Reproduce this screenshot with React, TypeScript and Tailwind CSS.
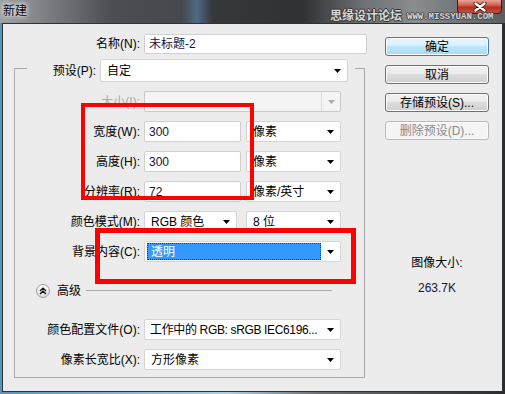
import React from "react"

const font = "font-['Liberation_Sans','Noto_Sans_CJK_SC',sans-serif]"

const Arrow = ({ color = "#000" }: { color?: string }) => (
  <svg width="7" height="4" viewBox="0 0 7 4">
    <path d="M0 0H7L3.5 4Z" fill={color} />
  </svg>
)

const Select = ({
  value,
  className,
  disabled,
  selected,
  tight,
}: {
  value?: string
  className: string
  disabled?: boolean
  selected?: boolean
  tight?: boolean
}) => (
  <div
    className={`flex items-center rounded-[2px] border ${
      disabled ? "border-[#c9c9c9] bg-[#f4f4f4]" : "border-[#d4d4d4] bg-white"
    } ${className}`}
  >
    {selected ? (
      <div className="ml-[2px] flex h-[17px] flex-1 items-center border border-dotted border-[#333] bg-[#3399ff] pl-[3px] text-white">
        {value}
      </div>
    ) : (
      <div
        className={`flex-1 overflow-hidden whitespace-nowrap ${tight ? "pl-[5px] tracking-[-0.35px]" : "pl-[6px]"}`}
      >
        {value}
      </div>
    )}
    <div
      className={`flex h-full w-[19px] shrink-0 items-center justify-center ${
        disabled ? "border-l border-[#dcdcdc]" : ""
      }`}
    >
      <Arrow color={disabled ? "#a8a8a8" : "#000"} />
    </div>
  </div>
)

const Input = ({ value, className }: { value: string; className: string }) => (
  <div
    className={`flex items-center rounded-[2px] border border-[#cfcfcf] bg-white pl-[4px] text-[#141440] ${className}`}
  >
    {value}
  </div>
)

const Label = ({ text, className, gray }: { text: string; className: string; gray?: boolean }) => (
  <div className={`shrink-0 text-right ${gray ? "text-[#a9a9a9]" : "text-black"} ${className}`}>
    {text}
  </div>
)

const Button = ({ text, kind }: { text: string; kind?: "default" | "disabled" }) => {
  const style =
    kind === "default"
      ? "border-[#3c7fb1] bg-[linear-gradient(#eaf6fd,#d9f0fc_45%,#bee6fd_50%,#a7d9f5)] text-black"
      : kind === "disabled"
        ? "border-[#b5b9bc] bg-[#f4f4f4] text-[#8a8a8a]"
        : "border-[#707070] bg-[linear-gradient(#f2f2f2,#ebebeb_45%,#dddddd_50%,#cfcfcf)] text-black"
  return (
    <div
      className={`flex h-[19px] w-[104px] items-center justify-center rounded-[3px] border shadow-[inset_0_0_0_1px_#fbfbfb] ${style}`}
    >
      {text}
    </div>
  )
}

export default function App() {
  return (
    <div
      className={`relative h-[394px] w-[505px] overflow-hidden bg-[linear-gradient(90deg,#5c93b6,#a9d0e6_45%,#6e7378_62%,#2a2c2e)] text-[12px] leading-[16px] ${font}`}
    >
      {/* title bar */}
      <div className="relative h-[23px] bg-[linear-gradient(90deg,#9da1a4_0%,#7c8084_9%,#4b4f53_22%,#45484c_36%,#4f6a85_39%,#36393c_42%,#2f3235_60%,#6d7074_72%,#8a8d90_82%,#5b5e61_100%)]">
        <div className="pl-[3px] pt-[3px] text-black [text-shadow:0_0_4px_#fff,0_0_6px_#fff]">新建</div>
        <div className="absolute left-[457px] top-[-1px] flex h-[15px] w-[45px] items-center justify-center rounded-b-[4px] border border-[#4a1510] bg-[linear-gradient(#e9a598,#d0604f_40%,#b8301f_55%,#c8503c)]">
          <svg width="14" height="10" viewBox="0 0 14 10">
            <path d="M2.5 1.5L11.5 8.5M11.5 1.5L2.5 8.5" stroke="#3a0d08" strokeWidth="4" strokeLinecap="round" />
            <path d="M2.5 1.5L11.5 8.5M11.5 1.5L2.5 8.5" stroke="#fff" strokeWidth="2.4" strokeLinecap="round" />
          </svg>
        </div>
        {/* watermark sits on top of the window chrome */}
        <div className="absolute left-[330px] top-[9px] flex items-end gap-[5px]">
          <span className="text-[12px] font-bold leading-[14px] text-[#d8d8d8] [text-shadow:-1px_0_#333,1px_0_#333,0_-1px_#333,0_1px_#333]">
            思缘设计论坛
          </span>
          <span className="font-['Liberation_Mono',monospace] text-[9px] font-bold leading-[11px] text-[#d8d8d8] [text-shadow:-1px_0_#444,1px_0_#444,0_-1px_#444,0_1px_#444]">
            WWW.MISSYUAN.COM
          </span>
        </div>
      </div>

      <div className="flex">
        <div className="w-[2px] shrink-0" />
        {/* client */}
        <div className="flex h-[369px] w-[501px] shrink-0 border border-[#2f3235] bg-[#ececec]">
          {/* left column */}
          <div className="w-[365px] shrink-0">
            <div className="mt-[10px] flex items-center">
              <Label text="名称(N):" className="w-[137px]" />
              <Input value="未标题-2" className="ml-[4px] h-[20px] w-[223px]" />
            </div>

            <div className="ml-[11px] mt-[14px] h-[310px] w-[351px] border border-[#a9a9a9]">
              <div className="-mt-[10px] ml-[12px] flex h-[23px] w-[328px] items-center bg-[#ececec]">
                <Label text="预设(P):" className="w-[69px]" />
                <Select value="自定" className="ml-[4px] h-[23px] w-[248px]" />
              </div>

              <div className="mt-[9px] flex items-center">
                <Label text="大小(I):" className="w-[125px]" gray />
                <Select className="ml-[4px] h-[21px] w-[197px]" disabled />
              </div>

              <div className="mt-[9px] flex items-center">
                <Label text="宽度(W):" className="w-[125px]" />
                <Input value="300" className="ml-[4px] h-[21px] w-[97px]" />
                <Select value="像素" className="ml-[5px] h-[21px] w-[95px]" />
              </div>

              <div className="mt-[9px] flex items-center">
                <Label text="高度(H):" className="w-[125px]" />
                <Input value="300" className="ml-[4px] h-[21px] w-[97px]" />
                <Select value="像素" className="ml-[5px] h-[21px] w-[95px]" />
              </div>

              <div className="mt-[9px] flex items-center">
                <Label text="分辨率(R):" className="w-[125px]" />
                <Input value="72" className="ml-[4px] h-[21px] w-[97px]" />
                <Select value="像素/英寸" className="ml-[5px] h-[21px] w-[95px]" />
              </div>

              <div className="mt-[9px] flex items-center">
                <Label text="颜色模式(M):" className="w-[125px]" />
                <Select value="RGB 颜色" className="ml-[4px] h-[21px] w-[93px]" />
                <Select value="8 位" className="ml-[9px] h-[21px] w-[95px]" />
              </div>

              <div className="mt-[9px] flex items-center">
                <Label text="背景内容(C):" className="w-[125px]" />
                <Select value="透明" className="ml-[4px] h-[21px] w-[197px]" selected />
              </div>

              <div className="mt-[22px] flex h-[14px] items-center">
                <div className="ml-[21px] flex h-[14px] w-[14px] items-center justify-center rounded-full border border-[#9a9a9a] bg-[linear-gradient(#ffffff,#dcdcdc)]">
                  <svg width="8" height="8" viewBox="0 0 8 8">
                    <path d="M1 4L4 1.2L7 4M1 7L4 4.2L7 7" stroke="#111" strokeWidth="1.3" fill="none" />
                  </svg>
                </div>
                <span className="ml-[7px]">高级</span>
                <div className="ml-[5px] h-[2px] w-[246px] border-t border-[#a9a9a9] border-b-white" />
              </div>

              <div className="mt-[21px] flex items-center">
                <Label text="颜色配置文件(O):" className="w-[125px]" />
                <Select value="工作中的 RGB: sRGB IEC6196..." className="ml-[4px] h-[21px] w-[197px]" tight />
              </div>

              <div className="mt-[9px] flex items-center">
                <Label text="像素长宽比(X):" className="w-[125px]" />
                <Select value="方形像素" className="ml-[4px] h-[21px] w-[197px]" />
              </div>
            </div>
          </div>

          {/* right column */}
          <div className="ml-[17px] mt-[13px] flex w-[104px] shrink-0 flex-col">
            <div className="flex flex-col gap-[9px]">
              <Button text="确定" kind="default" />
              <Button text="取消" />
              <Button text="存储预设(S)..." />
              <Button text="删除预设(D)..." kind="disabled" />
            </div>
            <div className="mt-[115px] text-center">图像大小:</div>
            <div className="mt-[9px] text-center text-[#141440]">263.7K</div>
          </div>
        </div>
      </div>

      {/* annotation boxes */}
      <div className="absolute left-[81px] top-[103px] h-[97px] w-[173px] border-4 border-[#ff0000]" />
      <div className="absolute left-[95px] top-[228px] h-[56px] w-[261px] border-[5px] border-[#ff0000]" />
    </div>
  )
}
